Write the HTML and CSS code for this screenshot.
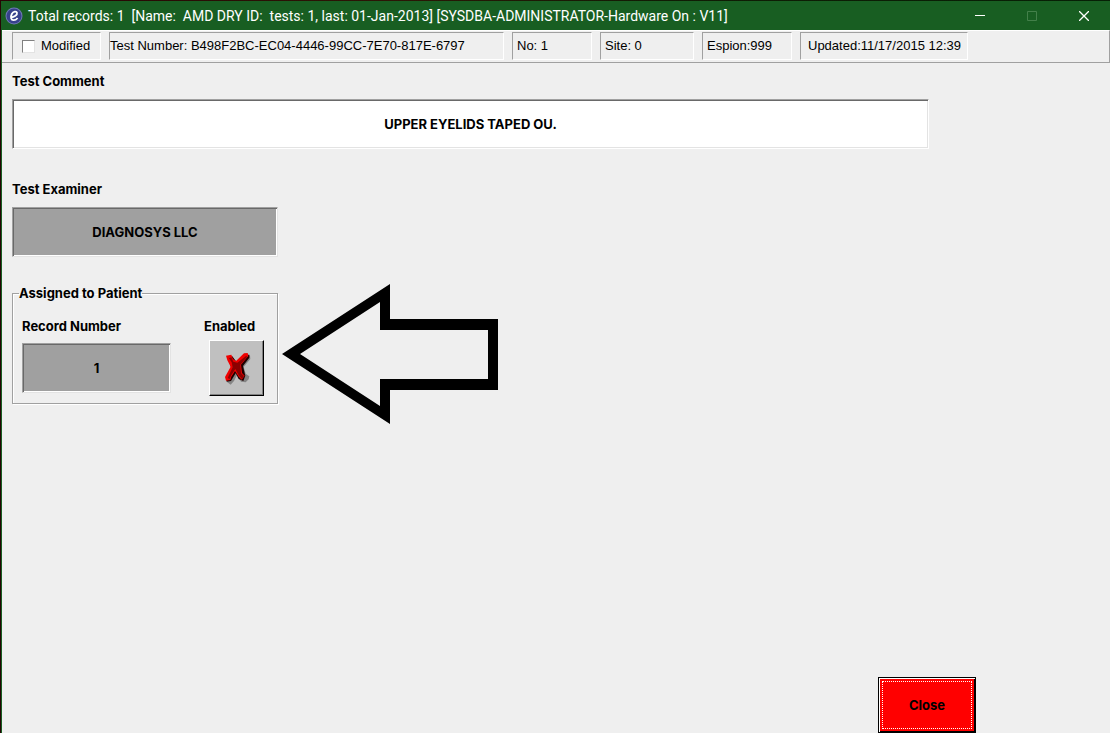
FILE: index.html
```html
<!DOCTYPE html>
<html lang="en">
<head>
  <meta charset="UTF-8">
  <meta name="viewport" content="width=device-width, initial-scale=1.0">
  <title>Test Details</title>
  <link rel="stylesheet" href="styles.css">
</head>
<body>

<div class="window">
  <!-- Title bar -->
  <header class="title-bar">
    <svg class="app-icon" viewBox="0 0 18 18" aria-hidden="true">
      <circle cx="9" cy="9" r="8.5" fill="#6f79b4"/>
      <circle cx="9" cy="9" r="7.5" fill="#37418c"/>
      <path d="M5.5 10.5C9.5 10 12.5 8 12 5.8C11.5 3.8 8.2 4.3 6.8 7C5.2 10 6 13.2 8.6 13.2C10.5 13.2 11.8 12 12.6 11" fill="none" stroke="#fff" stroke-width="1.8"/>
    </svg>
    <h1 class="title">Total records: 1&nbsp; [Name:&nbsp; AMD DRY ID:&nbsp; tests: 1, last: 01-Jan-2013] [SYSDBA-ADMINISTRATOR-Hardware On : V11]</h1>
    <div class="window-buttons">
      <button type="button" aria-label="Minimize">
        <svg viewBox="0 0 10 10"><path d="M0 4.5H10" stroke="#fff"/></svg>
      </button>
      <button type="button" aria-label="Maximize" disabled>
        <svg viewBox="0 0 10 10"><path d="M.5 .5H9.5V9.5H.5Z" fill="none" stroke="#43804a"/></svg>
      </button>
      <button type="button" aria-label="Close window">
        <svg viewBox="0 0 10 10"><path d="M0 0L10 10M10 0L0 10" stroke="#fff" stroke-width="1.3"/></svg>
      </button>
    </div>
  </header>

  <!-- Status panels -->
  <div class="status-bar">
    <label class="panel panel-modified"><input type="checkbox" id="modified">Modified</label>
    <div class="panel panel-number">Test Number: B498F2BC-EC04-4446-99CC-7E70-817E-6797</div>
    <div class="panel panel-no">No: 1</div>
    <div class="panel panel-site">Site: 0</div>
    <div class="panel panel-espion">Espion:999</div>
    <div class="panel panel-updated">Updated:11/17/2015 12:39</div>
  </div>

  <form class="content">
    <div class="form-group">
      <label for="comment">Test Comment</label>
      <input type="text" id="comment" class="field" value="UPPER EYELIDS TAPED OU.">
    </div>

    <div class="form-group">
      <label for="examiner">Test Examiner</label>
      <input type="text" id="examiner" class="field field-grey field-examiner" value="DIAGNOSYS LLC" readonly>
    </div>

    <!-- Patient assignment -->
    <div class="patient-row">
      <fieldset class="patient">
        <legend>Assigned to Patient</legend>
        <div class="patient-fields">
          <div class="record">
            <label for="record">Record Number</label>
            <input type="text" id="record" class="field field-grey" value="1" readonly>
          </div>
          <div class="enabled">
            <label for="enabled">Enabled</label>
            <button type="button" id="enabled" class="enabled-btn">
              <svg viewBox="66 60 84 102">
                <path d="M84 86L110 98L136 78L147 73L148 84L128 108L134 128L145 136L143 145L134 154L120 152L108 132L99 150L89 161L78 153L90 112Z" fill="#848484"/>
                <path d="M79 78L94 76L106 92L132 71L145 71L145 80L126 105L133 134L127 150L113 144L104 127L90 150L77 152L75 141L91 111Z" fill="#200000"/>
                <path d="M75 74L91 71L96 84L105 90L129 67L140 66L142 75L120 101L123 126L131 134L122 146L113 137L102 120L91 137L88 147L75 149L72 138L89 107L79 88Z" fill="#f00000"/>
                <path d="M84 82L91 79L97 92L109 95L136 74L138 78L118 101L120 127L129 135L123 144L114 134L103 114L91 132L86 144L80 141L95 109L92 94Z" fill="#8b0000"/>
              </svg>
            </button>
          </div>
        </div>
      </fieldset>

      <svg class="arrow" viewBox="0 0 216 140" aria-hidden="true">
        <path fill-rule="evenodd" d="M0 70L108 0V35H216V106H108V140ZM18 70L98 122V95H206V46H98V18Z"/>
      </svg>
    </div>

    <div class="actions">
      <button type="button" class="close-btn"><span>Close</span></button>
    </div>
  </form>
</div>

</body>
</html>
```
FILE: styles.css
```css
* {
  box-sizing: border-box;
}
body {
  margin: 0;
  min-height: 100vh;
  display: flex;
  padding: 1px 0 0 1px;
  background: linear-gradient(90deg, #260404, #2c1606 35%, #101c04 60%, #062006);
  font-family: "Liberation Sans", Arial, sans-serif;
  font-size: 13px;
  line-height: 16px;
  color: #000;
}
input, button {
  font: inherit;
  color: inherit;
}
.window {
  flex: 1;
  display: flex;
  flex-direction: column;
  border-left: 1px solid #185e22;
  background-color: #efefef;
}

/* Title bar */
.title-bar {
  display: flex;
  align-items: center;
  height: 29px;
  padding-left: 3px;
  gap: 5px;
  background-color: #185e22;
  color: #fff;
}
.app-icon {
  width: 18px;
  height: 18px;
}
.title {
  flex: 1;
  margin: 0;
  font-family: Roboto, "Noto Sans", sans-serif;
  font-size: 14px;
  font-weight: 400;
  line-height: 20px;
  white-space: nowrap;
}
.window-buttons {
  display: flex;
}
.window-buttons button {
  width: 52px;
  height: 28px;
  padding: 0;
  border: none;
  background: none;
}
.window-buttons svg {
  display: block;
  width: 10px;
  height: 10px;
  margin: 0 auto;
}

/* Status panels */
.status-bar {
  display: flex;
  gap: 8px;
  padding: 1px 0 2px 10px;
  border-top: 1px solid #fff;
  border-right: 1px solid #a0a0a0;
  border-bottom: 1px solid #a0a0a0;
}
.panel {
  height: 28px;
  padding: 5px 4px;
  border: 1px solid;
  border-color: #a0a0a0 #fff #fff #a0a0a0;
  white-space: nowrap;
}
.panel-modified {
  display: flex;
  align-items: center;
  gap: 6px;
  width: 89px;
  padding: 0 9px;
}
.panel-modified input {
  appearance: none;
  width: 13px;
  height: 13px;
  margin: 0;
  border: 1px solid;
  border-color: #808080 #e3e3e3 #e3e3e3 #808080;
  background-color: #fff;
}
.panel-number {
  width: 395px;
  padding-left: 0;
}
.panel-no {
  width: 80px;
}
.panel-site {
  width: 94px;
}
.panel-espion {
  width: 90px;
}
.panel-updated {
  width: 168px;
  padding-left: 7px;
}

/* Form */
.content {
  flex: 1;
  display: flex;
  flex-direction: column;
  padding: 10px 134px 0 10px;
  font-family: Inter, "Liberation Sans", sans-serif;
  font-weight: 700;
}
.content label {
  display: block;
}
.form-group {
  margin-bottom: 32px;
  padding-right: 47px;
}
.form-group label {
  margin-bottom: 10px;
}
.field {
  display: block;
  width: 100%;
  height: 50px;
  padding: 0;
  border: 1px solid;
  border-color: #a0a0a0 #fff #fff #a0a0a0;
  box-shadow: inset 1px 1px #696969, inset -1px -1px #e3e3e3;
  background-color: #fff;
  text-align: center;
}
.field-grey {
  border-color: #a0a0a0 #e3e3e3 #e3e3e3 #a0a0a0;
  box-shadow: inset 1px 1px #696969, inset -1px -1px #fff;
  background-color: #a0a0a0;
}
.field-examiner {
  width: 266px;
}
.patient-row {
  display: flex;
  align-items: flex-start;
  gap: 4px;
  margin-top: -5px;
}
.patient {
  width: 266px;
  margin: 1px 0 0;
  padding: 17px 8px 7px 9px;
  border: 1px solid #a0a0a0;
  box-shadow: inset 1px 1px #fff, 1px 1px #fff;
}
.patient legend {
  margin-left: -3px;
  padding: 0;
}
.patient-fields {
  display: flex;
  justify-content: space-between;
}
.record {
  width: 149px;
}
.record label {
  margin-bottom: 9px;
}
.enabled {
  width: 65px;
}
.enabled label {
  margin-bottom: 6px;
}
.enabled-btn {
  display: flex;
  align-items: center;
  justify-content: center;
  width: 55px;
  height: 56px;
  margin-left: 5px;
  padding: 0;
  border: 1px solid;
  border-color: #fff #000 #000 #fff;
  box-shadow: inset -1px -1px #808080;
  background-color: #c0c0c0;
}
.enabled-btn svg {
  width: 28px;
  height: 34px;
}
.arrow {
  width: 216px;
  height: 140px;
}

/* Footer */
.actions {
  display: flex;
  justify-content: flex-end;
  margin-top: auto;
}
.close-btn {
  width: 98px;
  height: 56px;
  padding: 3px;
  border: 1px solid #000;
  box-shadow: inset 1px 1px #fff, inset -1px -1px #000;
  background-color: #f00;
}
.close-btn span {
  display: flex;
  align-items: center;
  justify-content: center;
  height: 100%;
  border: 1px dotted #fff;
}
```
